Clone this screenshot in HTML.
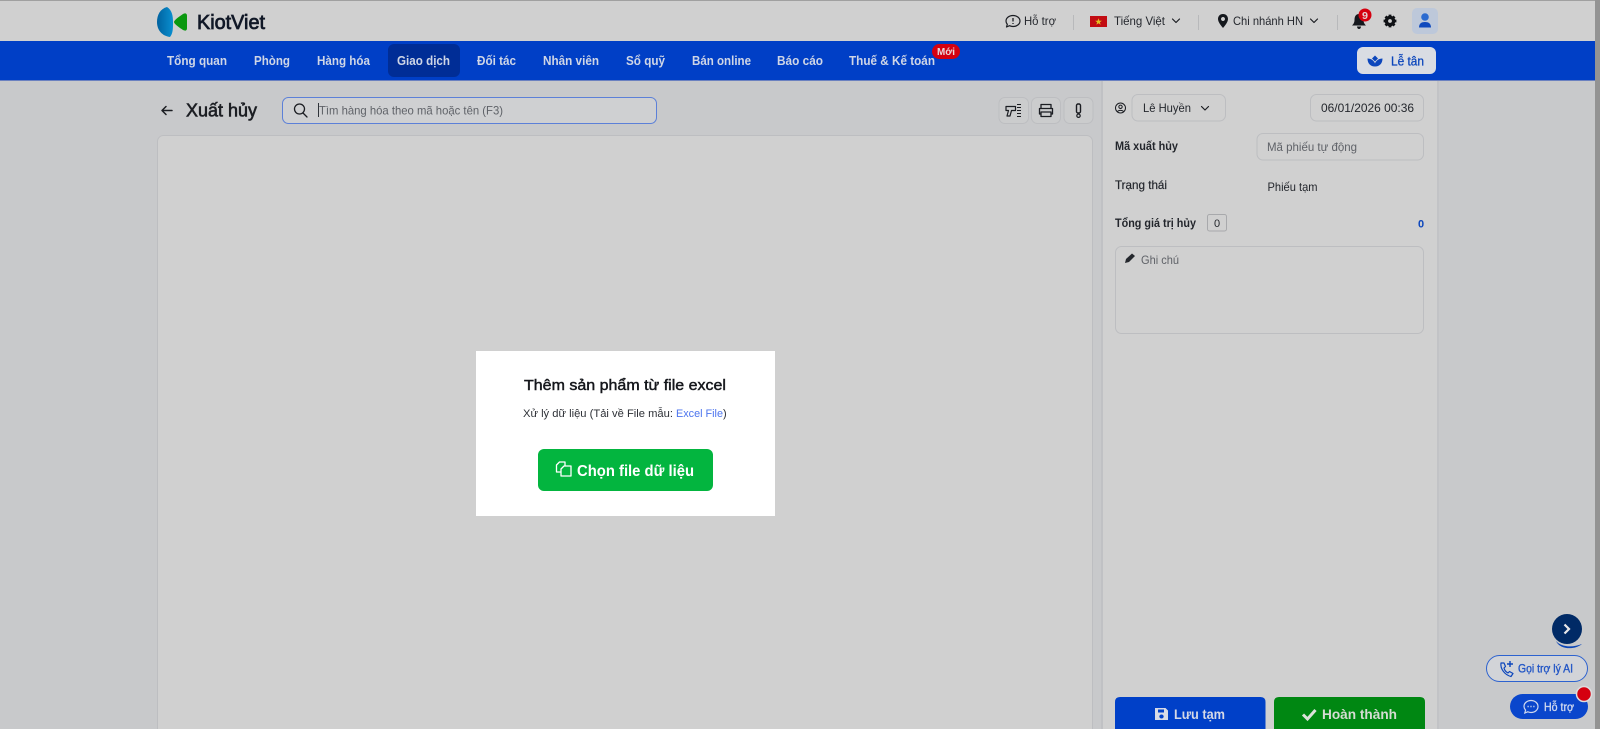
<!DOCTYPE html>
<html lang="vi"><head><meta charset="utf-8"><title>Xuất hủy - KiotViet</title>
<style>
html,body{margin:0;padding:0;width:1600px;height:729px;overflow:hidden;background:#c8c9cb}
svg{display:block;position:absolute;left:0;top:0;filter:blur(.35px)}
text{font-family:"Liberation Sans",Arial,sans-serif;font-size:12px;fill:#2a2d33}
.n{font-size:13px;font-weight:700;fill:#cfd6e6}
.t{font-size:12px;fill:#24272d}
.p{font-size:12px;fill:#5f6268}
.b{font-size:12px;font-weight:700;fill:#23262c}
.box{fill:#d0d0d0;stroke:#bdbec1;stroke-width:1}
.ic{fill:none;stroke:#1b1d22;stroke-width:1.4;stroke-linecap:round;stroke-linejoin:round}
</style></head><body>
<svg width="1600" height="729" viewBox="0 0 1600 729" xmlns="http://www.w3.org/2000/svg">
<defs>
<linearGradient id="lg" x1="0" x2="1" y1="0" y2="0"><stop offset="0" stop-color="#00629f"/><stop offset="1" stop-color="#0a8fd0"/></linearGradient>
</defs>
<rect width="1600" height="729" fill="#c8c9cb"/>
<rect width="1595" height="41" fill="#d0d0d0"/>
<rect width="1600" height="1" fill="#a0a0a0"/>
<rect y="41" width="1595" height="39" fill="#003fc6"/>
<rect y="80" width="1595" height="1" fill="#6b81c0"/>
<rect x="1595" width="5" height="729" fill="#939393"/>

<!-- logo -->
<path d="M167 7C160 9 157 15 157 22C157 30 162 36 170 37C173 33 173 29 173 22C173 16 172 10 167 7Z" fill="url(#lg)"/>
<path d="M187 16C187 13 185 13 183 14C180 16 174 20 174 22C174 24 180 28 183 30C185 31 187 31 187 28Z" fill="#0a980f"/>
<text x="197" y="29" style="font-size:20px;fill:#111827;stroke:#111827;stroke-width:.75" textLength="68" lengthAdjust="spacingAndGlyphs">KiotViet</text>

<!-- nav -->
<rect x="388" y="44" width="72" height="33" rx="6" fill="#002d96"/>
<text class="n" x="167" y="65" textLength="60" lengthAdjust="spacingAndGlyphs">Tổng quan</text>
<text class="n" x="254" y="65" textLength="36" lengthAdjust="spacingAndGlyphs">Phòng</text>
<text class="n" x="317" y="65" textLength="53" lengthAdjust="spacingAndGlyphs">Hàng hóa</text>
<text class="n" x="397" y="65" textLength="53" lengthAdjust="spacingAndGlyphs">Giao dịch</text>
<text class="n" x="477" y="65" textLength="39" lengthAdjust="spacingAndGlyphs">Đối tác</text>
<text class="n" x="543" y="65" textLength="56" lengthAdjust="spacingAndGlyphs">Nhân viên</text>
<text class="n" x="626" y="65" textLength="39" lengthAdjust="spacingAndGlyphs">Sổ quỹ</text>
<text class="n" x="692" y="65" textLength="59" lengthAdjust="spacingAndGlyphs">Bán online</text>
<text class="n" x="777" y="65" textLength="46" lengthAdjust="spacingAndGlyphs">Báo cáo</text>
<text class="n" x="849" y="65" textLength="86" lengthAdjust="spacingAndGlyphs">Thuế &amp; Kế toán</text>
<rect x="932" y="44" width="28" height="15" rx="7.5" fill="#d5000f"/>
<text x="937" y="55" style="font-size:10px;font-weight:700;fill:#e8d8da" textLength="18" lengthAdjust="spacingAndGlyphs">Mới</text>

<!-- top right -->
<path class="ic" style="stroke-width:1.2" d="M1013 15.5C1017 15.5 1020 18 1020 21C1020 24 1017 26.500 1013 26.500C1011.500 26.500 1010.500 26.200 1009.500 25.700L1006.500 27L1007.300 24.300C1006.500 23.400 1006 22.300 1006 21C1006 18 1009 15.500 1013 15.500Z"/>
<path d="M1013 18V21.500M1013 23V24" stroke="#1b1d22" stroke-width="1.3"/>
<text class="t" x="1024" y="25" textLength="32" lengthAdjust="spacingAndGlyphs">Hỗ trợ</text>
<rect x="1073" y="15" width="1" height="15" fill="#b8b9bb"/>
<rect x="1090" y="16" width="17" height="11" fill="#c20c12"/>
<path d="M1098.500 18.200L1099.400 20.700L1101.900 20.700L1099.900 22.300L1100.600 24.800L1098.500 23.300L1096.400 24.800L1097.100 22.300L1095.100 20.700L1097.600 20.700Z" fill="#e3c020"/>
<text class="t" x="1114" y="25" textLength="51" lengthAdjust="spacingAndGlyphs">Tiếng Việt</text>
<path class="ic" style="stroke-width:1.2" d="M1172.500 19L1176 22.500L1179.500 19"/>
<rect x="1198" y="15" width="1" height="15" fill="#b8b9bb"/>
<path fill-rule="evenodd" d="M1223 14C1219.800 14 1218 16.300 1218 19C1218 22 1221 25.500 1223 28C1225 25.500 1228 22 1228 19C1228 16.300 1226.200 14 1223 14ZM1223 17C1224.200 17 1225 17.900 1225 19C1225 20.100 1224.200 21 1223 21C1221.800 21 1221 20.100 1221 19C1221 17.900 1221.800 17 1223 17Z" fill="#15181d"/>
<text class="t" x="1233" y="25" textLength="70" lengthAdjust="spacingAndGlyphs">Chi nhánh HN</text>
<path class="ic" style="stroke-width:1.2" d="M1310.500 19L1314 22.500L1317.500 19"/>
<rect x="1337" y="15" width="1" height="15" fill="#b8b9bb"/>
<path d="M1359 14C1355.500 14 1354.500 17 1354.500 20C1354.500 23 1353 24.500 1352 25.500H1366C1365 24.500 1363.500 23 1363.500 20C1363.500 17 1362.500 14 1359 14Z" fill="#15181d"/>
<path d="M1357 26.500H1361C1361 28 1360 29 1359 29C1358 29 1357 28 1357 26.500Z" fill="#15181d"/>
<circle cx="1365" cy="15" r="6.500" fill="#d5000f"/>
<text x="1362" y="19" style="font-size:10px;font-weight:700;fill:#e5d0d2" textLength="6" lengthAdjust="spacingAndGlyphs">9</text>
<circle cx="1390" cy="21" r="3.600" fill="none" stroke="#101216" stroke-width="3.400"/>
<path d="M1390 14.600V17M1390 25V27.400M1383.600 21H1386M1394 21H1396.400M1385.500 16.500L1387 18M1393 24L1394.500 25.500M1394.500 16.500L1393 18M1387 24L1385.500 25.500" stroke="#101216" stroke-width="2.800"/>
<rect x="1412" y="8" width="26" height="26" rx="5" fill="#bdc8da"/>
<circle cx="1425" cy="17" r="3.800" fill="#2c6bd0"/>
<path d="M1419 27.500C1419 23.500 1421.500 22 1425 22C1428.500 22 1431 23.500 1431 27.500Z" fill="#0f49bd"/>
<rect x="1357" y="47" width="79" height="27" rx="6" fill="#d9dce3"/>
<path d="M1375 55.500L1378 58.500L1375 61.500L1372 58.500Z" fill="#0c46bc"/>
<path d="M1367.500 58.500C1371 58.500 1374 60.500 1375 63.500C1376 60.500 1379 58.500 1382.500 58.500C1382.500 63.500 1379.500 66.500 1375 66.500C1370.500 66.500 1367.500 63.500 1367.500 58.500Z" fill="#0c46bc"/>
<text x="1391" y="65.500" style="font-size:13px;fill:#0c46bc;stroke:#0c46bc;stroke-width:.3" textLength="33" lengthAdjust="spacingAndGlyphs">Lễ tân</text>

<!-- title row -->
<path class="ic" style="stroke-width:1.500" d="M172 110.500H162M166 106.500L162 110.500L166 114.500"/>
<text x="186" y="116.500" style="font-size:18px;fill:#1c1e23;stroke:#1c1e23;stroke-width:.6" textLength="71" lengthAdjust="spacingAndGlyphs">Xuất hủy</text>
<rect x="282.500" y="97.500" width="374" height="26" rx="6" fill="#cfd0d2" stroke="#5c80d8"/>
<circle cx="299.500" cy="109" r="5" class="ic" style="stroke-width:1.300"/>
<path class="ic" style="stroke-width:1.300" d="M303 113L307 117"/>
<rect x="318" y="103" width="1" height="14" fill="#30343a"/>
<text class="p" x="319" y="114.500" textLength="184" lengthAdjust="spacingAndGlyphs">Tìm hàng hóa theo mã hoặc tên (F3)</text>

<rect x="999" y="97.500" width="29.500" height="26" rx="6" class="box" style="fill:#cbcccd"/>
<rect x="1031.500" y="97.500" width="29" height="26" rx="6" class="box" style="fill:#cbcccd"/>
<rect x="1064" y="97.500" width="29" height="26" rx="6" class="box" style="fill:#cbcccd"/>
<path class="ic" style="stroke-width:1.200" d="M1006 106.500H1015.500V110.500H1011.500L1010 116H1007L1008.500 110.500H1006Z"/>
<path d="M1017 104.500H1021M1017 107.500H1021M1017 110.500H1021M1017 113.500H1021M1017 116.500H1021" stroke="#1b1d22" stroke-width="1"/>
<path class="ic" style="stroke-width:1.300" d="M1041 108V104.500H1051V108M1041 114H1039.500V108.500H1052.500V114H1051M1041 112H1051V116.500H1041Z"/>
<rect x="1076.500" y="104" width="4" height="9" rx="1.500" class="ic"/>
<circle cx="1078.500" cy="115.700" r="1.700" class="ic" style="stroke-width:1.200"/>

<!-- main card -->
<rect x="157.500" y="135.500" width="935" height="620" rx="6" class="box"/>
<rect x="476" y="351" width="299" height="165" fill="#fff"/>
<text x="524" y="390" style="font-size:15px;fill:#15171c;stroke:#15171c;stroke-width:.45" textLength="202" lengthAdjust="spacingAndGlyphs">Thêm sản phẩm từ file excel</text>
<text x="523" y="417" style="font-size:11px;fill:#2d3036" textLength="150" lengthAdjust="spacingAndGlyphs">Xử lý dữ liệu (Tải về File mẫu:</text>
<text x="676" y="417" style="font-size:11px;fill:#4c74ee" textLength="47" lengthAdjust="spacingAndGlyphs">Excel File</text>
<text x="723" y="417" style="font-size:11px;fill:#2d3036">)</text>
<rect x="538" y="449" width="175" height="42" rx="6" fill="#03b53f"/>
<path fill="none" stroke="#fff" stroke-width="1.300" stroke-linejoin="round" d="M561 472H556.500V465L559.500 462H565V466M564 466H571V476H561V469Z"/>
<text x="577" y="476" style="font-size:16px;font-weight:700;fill:#fff" textLength="117" lengthAdjust="spacingAndGlyphs">Chọn file dữ liệu</text>

<!-- right panel -->
<rect x="1101" y="81" width="2" height="648" fill="#c0c1c4"/>
<rect x="1103" y="81" width="334" height="648" fill="#d0d0d0"/>
<rect x="1437" y="81" width="2" height="648" fill="#c2c3c6"/>
<circle cx="1120.500" cy="108" r="5" class="ic" style="stroke-width:1"/>
<circle cx="1120.500" cy="106.800" r="1.700" class="ic" style="stroke-width:1"/>
<path class="ic" style="stroke-width:1" d="M1117.500 111.500C1118.500 110 1122.500 110 1123.500 111.500"/>
<rect x="1132" y="94.500" width="93.500" height="26.500" rx="6" class="box"/>
<text class="t" x="1143" y="112" textLength="48" lengthAdjust="spacingAndGlyphs">Lê Huyền</text>
<path class="ic" style="stroke-width:1.200" d="M1201.500 106.500L1205 110L1208.500 106.500"/>
<rect x="1310.500" y="94.500" width="113" height="26.500" rx="6" class="box"/>
<text class="t" x="1321" y="112" textLength="93" lengthAdjust="spacingAndGlyphs">06/01/2026 00:36</text>

<text class="b" x="1115" y="150" textLength="63" lengthAdjust="spacingAndGlyphs">Mã xuất hủy</text>
<rect x="1257" y="133.500" width="166.500" height="26.500" rx="6" class="box"/>
<text class="p" x="1267" y="151" textLength="90" lengthAdjust="spacingAndGlyphs">Mã phiếu tự động</text>
<text class="t" x="1115" y="189" textLength="52" lengthAdjust="spacingAndGlyphs" style="stroke:#24272d;stroke-width:.2">Trạng thái</text>
<text class="t" x="1267.500" y="191" textLength="50" lengthAdjust="spacingAndGlyphs">Phiếu tạm</text>
<text class="b" x="1115" y="227" textLength="81" lengthAdjust="spacingAndGlyphs">Tổng giá trị hủy</text>
<rect x="1207.500" y="214.500" width="19" height="16.500" rx="2" fill="none" stroke="#a8a9ac"/>
<text class="t" x="1214" y="227" style="font-size:11px">0</text>
<text x="1418" y="227.500" style="font-size:11px;font-weight:700;fill:#0c46bc">0</text>
<rect x="1115.500" y="246.500" width="308" height="87" rx="6" class="box"/>
<path d="M1125 263L1126 259L1132 253.500L1135 256L1129 262Z" fill="#25282d"/>
<text class="p" x="1141" y="264" textLength="38" lengthAdjust="spacingAndGlyphs">Ghi chú</text>

<path d="M1115 729V702Q1115 697 1120 697H1260.500Q1265.500 697 1265.500 702V729Z" fill="#0040c8"/>
<path d="M1274 729V702Q1274 697 1279 697H1420Q1425 697 1425 702V729Z" fill="#008712"/>
<path fill-rule="evenodd" d="M1155 708H1165.500L1168 710.500V720H1155ZM1158 709.500V712.500H1164V709.500ZM1161.500 714.500C1160.200 714.500 1159.300 715.400 1159.300 716.500C1159.300 717.600 1160.200 718.500 1161.500 718.500C1162.800 718.500 1163.700 717.600 1163.700 716.500C1163.700 715.400 1162.800 714.500 1161.500 714.500Z" fill="#d6dae6"/>
<text x="1174" y="719" style="font-size:14px;font-weight:700;fill:#d6dae6" textLength="51" lengthAdjust="spacingAndGlyphs">Lưu tạm</text>
<path d="M1303 714.500L1307.500 719L1315.500 710" fill="none" stroke="#dce2da" stroke-width="3"/>
<text x="1322" y="719" style="font-size:14px;font-weight:700;fill:#d5dcd3" textLength="75" lengthAdjust="spacingAndGlyphs">Hoàn thành</text>

<!-- floating widgets -->
<path d="M1556 641C1561 647 1572 648 1582 644C1575 650 1560 650 1556 641Z" fill="#0b46b8"/>
<circle cx="1567" cy="629" r="15" fill="#002a66"/>
<path d="M1564.500 624.500L1569 629L1564.500 633.500" fill="none" stroke="#e8e8ea" stroke-width="2.200"/>
<rect x="1486.500" y="655.500" width="101" height="26" rx="13" fill="#d2d4d8" stroke="#2d62cf"/>
<path fill="none" stroke="#0c46bc" stroke-width="1.200" stroke-linejoin="round" d="M1501 663C1500 669 1505 675 1511 676.500L1513 673.500L1509.500 671.500L1508 673C1506 672 1504.500 670 1504 668L1505.500 666.500L1504 663Z"/>
<path d="M1510 661V667M1507 664H1513" stroke="#0c46bc" stroke-width="1.400"/>
<text x="1518" y="672.500" style="font-size:12px;fill:#2256c6;stroke:#2256c6;stroke-width:.35" textLength="55" lengthAdjust="spacingAndGlyphs">Gọi trợ lý AI</text>
<rect x="1510" y="694" width="78" height="25" rx="12.500" fill="#0a46cc"/>
<path fill="none" stroke="#cfd8ee" stroke-width="1.200" d="M1531 700.500C1535 700.500 1538 703.200 1538 706.500C1538 709.800 1535 712.500 1531 712.500C1529.800 712.500 1528.800 712.200 1527.800 711.800L1524.800 713L1525.600 710.200C1524.700 709.200 1524 708 1524 706.500C1524 703.200 1527 700.500 1531 700.500Z"/>
<path d="M1527.500 706.500H1528.700M1530.400 706.500H1531.600M1533.300 706.500H1534.500" stroke="#cfd8ee" stroke-width="1.400"/>
<text x="1544" y="711" style="font-size:12px;fill:#cfd8ee;stroke:#cfd8ee;stroke-width:.35" textLength="30" lengthAdjust="spacingAndGlyphs">Hỗ trợ</text>
<circle cx="1584" cy="694" r="7.500" fill="#d5000f" stroke="#dcdcde" stroke-width="1.500"/>
</svg>
</body></html>
